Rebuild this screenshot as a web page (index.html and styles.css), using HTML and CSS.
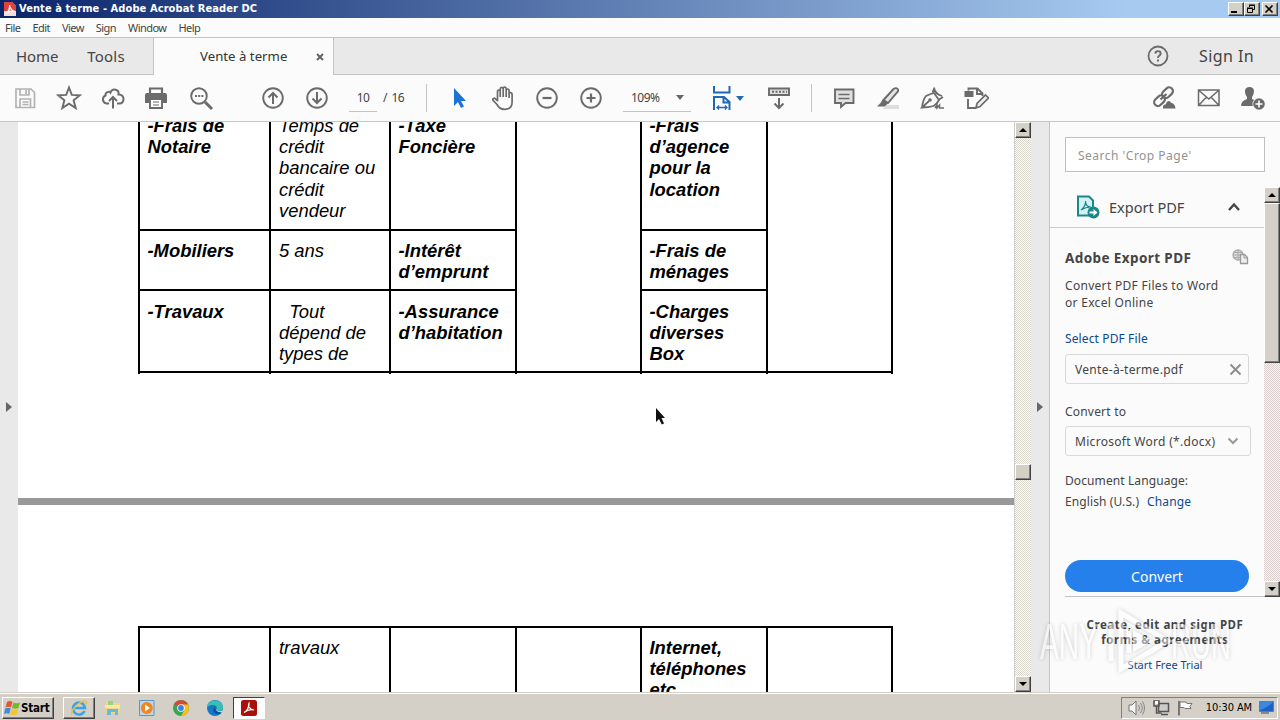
FILE: index.html
```html
<!DOCTYPE html>
<html lang="en">
<head>
    <meta charset="UTF-8">
    <title>Vente à terme - Adobe Acrobat Reader DC</title>
    <link rel="stylesheet" href="styles.css">
</head>
<body>
    <header class="titlebar">
        <svg class="app-icon" width="12" height="14" viewBox="0 0 12 14"><path d="M0 0h8l4 4v10H0z" fill="#f6dcd8"/><path d="M0 0h8l4 4v5H0z" fill="#d8281e" opacity=".85"/><path d="M2 11c3-2 4-5 3.500-8 .5 4 2 5.500 5 6-3-.5-6 .5-8.500 2z" fill="none" stroke="#fff" stroke-width="1.200"/></svg>
        <span class="title-text">Vente à terme - Adobe Acrobat Reader DC</span>
        <div class="win-buttons">
            <button class="bevel"><svg width="12" height="10"><path d="M2 8h6" stroke="#000" stroke-width="2"/></svg></button>
            <button class="bevel"><svg width="12" height="10" fill="none" stroke="#000"><path d="M4.500 3V1.500h5v4H8M4 1h6M2.500 4.500h5v4h-5zM2 4h6"/></svg></button>
            <button class="bevel close"><svg width="12" height="10"><path d="M2.500 1.500l7 7M9.500 1.500l-7 7" stroke="#000" stroke-width="1.600"/></svg></button>
        </div>
    </header>

    <nav class="menubar">
        <span>File</span><span>Edit</span><span>View</span><span>Sign</span><span>Window</span><span>Help</span>
    </nav>

    <div class="tabs">
        <div class="main-tabs"><span class="home">Home</span><span class="tools">Tools</span></div>
        <div class="doc-tab"><span>Vente à terme</span><svg width="8" height="8"><path d="M1 1l6 6M7 1l-6 6" stroke="#666" stroke-width="2"/></svg></div>
        <div class="tabs-rest">
            <svg width="22" height="22" viewBox="0 0 22 22"><circle cx="11" cy="11" r="9.500" fill="none" stroke="#6b6b6b" stroke-width="1.800"/><path d="M8.300 8.600c.2-3.300 5.400-3.200 5.400 0 0 2-2.700 2-2.700 4.300" fill="none" stroke="#6b6b6b" stroke-width="1.900"/><path d="M10 14.500h2v2h-2z" fill="#6b6b6b"/></svg>
            <span class="sign-in">Sign In</span>
        </div>
    </div>

    <div class="toolbar">
        <div class="tool light"><svg viewBox="0 0 26 26"><path d="M4 4h15l3.500 3.500V22.500H4zM8 4v6h9V4M14 5v4M8 22v-8h10.500v8M10.500 17h6M10.500 19.500h6"/></svg></div>
        <div class="tool"><svg viewBox="0 0 26 26"><path d="M13 2.500l2.800 7.400 8 .4-6.200 5 2.100 7.700-6.700-4.300L6.300 23l2.100-7.700-6.200-5 8-.4z"/></svg></div>
        <div class="tool"><svg viewBox="0 0 26 26"><path d="M9 18.500H6.500A4.200 4.200 0 0 1 5.500 10.500C5 7 9.500 6 10.500 7.500 12.500 2.500 19.500 4.500 18.500 9.500 25 9 25 18.500 19.500 18.500H17M13 23.500V12.500M9 16l4-4 4 4" stroke-width="2"/></svg></div>
        <div class="tool"><svg viewBox="1 0 26 26"><path d="M7 9V3.500h12V9" stroke-width="2.200"/><path class="fill" d="M4 8h18q2 0 2 2v8h-4v-3H6v3H2v-8q0-2 2-2z"/><path d="M7 14h12v9H7z" fill="#fff"/><path d="M10 17h6M10 20h6" stroke-width="1.200"/></svg></div>
        <div class="tool"><svg viewBox="0 0 26 26"><circle cx="11" cy="11" r="7.800"/><path d="M17 17l7 7" stroke-width="3"/><path class="fill" d="M7 10h2v2H7zM10.200 10h2v2h-2zM13.400 10h2v2h-2z"/></svg></div>
        <div class="tool after-gap"><svg viewBox="0 0 26 26"><circle cx="13" cy="13" r="9.800"/><path d="M13 19V8.500M8.500 12.500L13 8l4.500 4.500" stroke-width="2"/></svg></div>
        <div class="tool"><svg viewBox="0 0 26 26"><circle cx="13" cy="13" r="9.800"/><path d="M13 7v10.500M8.500 13.500L13 18l4.500-4.500" stroke-width="2"/></svg></div>
        <div class="pages"><span class="page-input">10</span><span class="page-total">/&nbsp; 16</span></div>
        <div class="tool"><svg viewBox="0 0 26 26"><path d="M8 3v18l4-4 3 6 3-1.500-3-5.500h5z" fill="#1b73d4" stroke="none"/></svg></div>
        <div class="tool"><svg viewBox="0 0 26 26"><path d="M7.500 15V6.500c0-2 2.700-2 2.700 0V12 4c0-2.200 3-2.200 3 0v8V3.500c0-2 3-2 3 .3V12 5.500c0-2 2.900-2 2.900 0V13 9c0-1.800 3-1.800 3 .2V17c0 5-3 7.300-7.500 7.300S8.500 22.500 7 19.500L3 15.300c-.8-1.800 1.200-2.800 2.500-1.500L8 16" stroke-width="1.700"/></svg></div>
        <div class="tool"><svg viewBox="0 0 26 26"><circle cx="13" cy="13" r="9.800"/><path d="M8.500 13h9" stroke-width="2.200"/></svg></div>
        <div class="tool"><svg viewBox="0 0 26 26"><circle cx="13" cy="13" r="9.800"/><path d="M8.500 13h9M13 8.500v9" stroke-width="2.200"/></svg></div>
        <div class="zoom-level"><span>109%</span><i class="caret"></i></div>
        <div class="fit"><svg viewBox="0 0 26 26" width="26" height="26"><g fill="none" stroke="#2267b4" stroke-width="2"><path d="M5 1v6.500h15.500V1M5 25V12h10l5.500 5V25M14.500 12v5.500h6"/><path d="M8 22.500h10M10 20.500l-2 2 2 2M16 20.500l2 2-2 2" stroke-width="1.300"/></g></svg><i class="caret blue"></i></div>
        <div class="tool"><svg viewBox="0 0 26 26"><path d="M3 3.500h20v6.500H3z" fill="#e0e0e0"/><path d="M6 6.700h15" stroke-dasharray="2 1.500"/><path d="M13 13v10M8.500 18.500l4.500 4.500 4.500-4.500" stroke-width="2"/></svg></div>
        <i class="sep"></i>
        <div class="tool"><svg viewBox="0 0 26 26"><path d="M4 4.500h18.500V18h-8L10 22v-4H4z" fill="#e0e0e0"/><path d="M7.500 9.500h11M7.500 13.500h11" stroke-width="1.600"/></svg></div>
        <div class="tool"><svg viewBox="0 0 26 26"><path d="M10 20h14v4H8z" fill="#dedede" stroke="none"/><path d="M8.500 15L18.500 4q3-2 4.500.5.500 1.500-.5 2.500L13 18z" fill="#e4e4e4"/><path class="fill" d="M7.500 14.500l5.500 4-3.500 3H2l4-4z"/></svg></div>
        <div class="tool"><svg viewBox="0 0 26 26"><path d="M3 22.500q1-8 4-11.500 4-2 8-3l5 7q-2 4-5.500 6-5 1.500-11.500 1.500L10 16M13.500 7.500l2-5M20 14.500l4-2.500M15 3q1 6 8 8" stroke-width="1.800"/><circle cx="11" cy="15" r="1.800" class="fill"/><path d="M16 23l2-3v3l2.500-3v3H25" stroke-width="1.500"/></svg></div>
        <div class="tool"><svg viewBox="0 0 26 26"><path class="fill" d="M1.500 6h9v6h-9z"/><path d="M5.500 5.500V3.500h9l5 5V11M14 3.500V9h5.500M5 14v9h8"/><path d="M13 23l1-4.500 8.500-8.500 3 3-8.500 8.500z" fill="#f0f0f0" stroke-width="1.700"/></svg></div>
        <div class="tool push"><svg viewBox="0 0 26 26"><g stroke-width="2.200"><rect x="10.500" y="4" width="12" height="7.500" rx="3.700" transform="rotate(-43 16.500 7.700)"/><rect x="2.500" y="12" width="12" height="7.500" rx="3.700" transform="rotate(-43 8.500 15.700)"/><path d="M9.500 14.500l6-5.500"/></g><path d="M11 25q-1-5.500 3-6.500Q17 12 21 17.500q4 1 4 7.500z" fill="#fbfbfb" stroke="none"/><path class="fill" d="M12 23.500q-.5-4 2.500-4Q17 13.500 20.500 18q3.500.5 4 5.500z"/></svg></div>
        <div class="tool mail"><svg viewBox="0 0 26 26"><path d="M2.500 5h20.500v15.500H2.500zM3 5.500l9.800 8.500 9.800-8.500M3 20l7.500-8M22.500 20L15 12" stroke-width="1.500"/></svg></div>
        <div class="tool"><svg viewBox="0 0 26 26"><path class="fill" d="M9.500 2C15 2 15 8 12 12v2l4 2v5H1q0-5 6-7v-2C4 8 4 2 9.500 2z"/><circle cx="19" cy="19" r="6.500" fill="#fbfbfb" stroke="none"/><circle cx="19" cy="19" r="5.800" class="fill"/><path d="M15.500 19h7M19 15.500v7" stroke="#fff" stroke-width="1.600"/></svg></div>
    </div>

    <main class="workspace">
        <div class="rail left"><i class="expand"></i></div>

        <section class="document">
            <div class="page page-top">
                <div class="budget">
                    <div class="col c1"><div class="cell r1"><p>-Frais de<br>Notaire</p></div><div class="cell r2">-Mobiliers</div><div class="cell r3">-Travaux</div></div>
                    <div class="col c2 plain"><div class="cell r1"><p>Temps de<br>crédit<br>bancaire ou<br>crédit<br>vendeur</p></div><div class="cell r2">5 ans</div><div class="cell r3">&nbsp; Tout<br>dépend de<br>types de</div></div>
                    <div class="col c3"><div class="cell r1"><p>-Taxe<br>Foncière</p></div><div class="cell r2">-Intérêt<br>d’emprunt</div><div class="cell r3">-Assurance<br>d’habitation</div></div>
                    <div class="col c4"><div class="cell merged"></div></div>
                    <div class="col c5"><div class="cell r1"><p>-Frais<br>d’agence<br>pour la<br>location</p></div><div class="cell r2">-Frais de<br>ménages</div><div class="cell r3">-Charges<br>diverses<br>Box</div></div>
                    <div class="col c6"><div class="cell merged"></div></div>
                </div>
            </div>
            <div class="page page-next">
                <div class="budget">
                    <div class="col c1"></div>
                    <div class="col c2 plain"><div class="cell">travaux</div></div>
                    <div class="col c3"></div>
                    <div class="col c4"></div>
                    <div class="col c5"><div class="cell">Internet,<br>téléphones<br>etc</div></div>
                    <div class="col c6"></div>
                </div>
            </div>
            <svg class="pointer" width="12" height="18" viewBox="0 0 12 18"><path d="M1 0v14l3-3 2.800 5.500 2.200-1L6.500 10H10z" fill="#111"/></svg>
        </section>

        <div class="scrollbar doc-scroll">
            <span class="bevel sb-btn"><i class="up"></i></span>
            <span class="bevel thumb"></span>
            <span class="bevel sb-btn"><i class="down"></i></span>
        </div>
        <div class="rail right"><i class="expand"></i></div>

        <aside class="panel">
            <div class="search">Search 'Crop Page'</div>
            <div class="panel-body">
                <div class="panel-content">
                    <div class="export-head">
                        <svg width="24" height="24" viewBox="0 0 24 24"><path d="M2 1.500h11l4 4V20.500H2z" fill="#d5f0f2" stroke="#17898b" stroke-width="2"/><path d="M5 15c3-2 5-6 4.500-9 0 4 2 6 5.500 6-4 0-7 1-10 3z" fill="none" stroke="#17898b" stroke-width="1.200"/><circle cx="17.500" cy="17.500" r="6" fill="#17898b"/><path d="M13.500 16.500h4v-2.500l4 3.500-4 3.500v-2.500h-4z" fill="#fff"/></svg>
                        <span>Export PDF</span>
                        <svg class="chev" width="14" height="10"><path d="M2 8l5-5.500L12 8" fill="none" stroke="#444" stroke-width="2.400"/></svg>
                    </div>
                    <div class="form">
                        <div class="form-title"><b>Adobe Export PDF</b>
                            <svg width="17" height="16" viewBox="0 0 17 16"><circle cx="6" cy="6" r="5" fill="#ddd" stroke="#aaa" stroke-width="1.300"/><path d="M1 6h10M6 1v10M2 3.500h8M2 8.500h8" stroke="#aaa"/><path d="M8.500 5.500h4l3 3V14.500h-7z" fill="#eee" stroke="#999" stroke-width="1.300"/><path d="M12 5.500V9h3.500" fill="none" stroke="#999"/></svg>
                        </div>
                        <p class="desc">Convert PDF Files to Word<br>or Excel Online</p>
                        <a class="select-file">Select PDF File</a>
                        <div class="field file"><span>Vente-à-terme.pdf</span><svg width="13" height="13"><path d="M1.500 1.500l10 10M11.500 1.500l-10 10" stroke="#8e8e8e" stroke-width="2"/></svg></div>
                        <label>Convert to</label>
                        <div class="field format"><span>Microsoft Word (*.docx)</span><svg width="12" height="8"><path d="M1.500 1.500L6 6l4.500-4.500" fill="none" stroke="#999" stroke-width="2"/></svg></div>
                        <p class="doc-lang">Document Language:</p>
                        <p class="lang"><span>English (U.S.)</span><a>Change</a></p>
                        <button class="convert">Convert</button>
                    </div>
                </div>
                <div class="scrollbar panel-scroll">
                    <span class="bevel sb-btn"><i class="up"></i></span>
                    <span class="bevel thumb"></span>
                    <span class="bevel sb-btn"><i class="down"></i></span>
                </div>
            </div>
            <div class="promo">
                <b>Create, edit and sign PDF<br>forms &amp; agreements</b>
                <a>Start Free Trial</a>
            </div>
        </aside>
    </main>

    <svg class="watermark" width="200" height="70" viewBox="0 0 200 70">
        <g fill="#fff" font-family="Liberation Sans, sans-serif" font-size="50">
            <text x="3" y="52" textLength="58" lengthAdjust="spacingAndGlyphs">ANY</text>
            <text x="134" y="52" textLength="60" lengthAdjust="spacingAndGlyphs">RUN</text>
        </g>
        <path d="M74 16v38M84 6l47 28-47 28zM92 22v24" fill="none" stroke="#fff" stroke-width="5"/>
        <path d="M96 23l20 11-20 11z" fill="#fff"/>
    </svg>

    <footer class="taskbar">
        <button class="bevel start"><svg width="17" height="16" viewBox="0 0 17 16"><path d="M3 2q3-2 5.500 0L7 7.500Q4.500 6 1.500 7.500z" fill="#e8552b"/><path d="M9.500 2.500q3 1.500 6.500 0L14.500 8Q11 9.500 8 8z" fill="#76b82a"/><path d="M1.200 8.500q3-1.500 5.500 0L5.200 14Q3 12.500 0 14z" fill="#3c8edb"/><path d="M7.700 9q3 1.500 6.500 0l-1.500 5.500q-3 1.500-6.500 0z" fill="#f6c52c"/></svg>Start</button>
        <span class="bevel task ie"><svg width="18" height="18" viewBox="0 0 18 18"><path d="M14.500 12a6 6 0 1 1 .5-3H4" fill="none" stroke="#3aa5e2" stroke-width="2.600"/><path d="M2 16C-1 12 12 0 16 2.500c1 1 0 3-1 4" fill="none" stroke="#f0c042" stroke-width="1.500"/></svg></span>
        <span class="task"><svg width="18" height="16" viewBox="0 0 18 16"><path d="M2 2h6l1 1h7v10H2z" fill="#f1d883"/><path d="M4 1h5v4H4z" fill="#9bd07c"/><path d="M1 5h15v3H1z" fill="#f8e9a9"/><path d="M3 15V9h11v6h-3v-3H7v3z" fill="#6bb7dd"/></svg></span>
        <span class="task"><svg width="16" height="16" viewBox="0 0 16 16"><path d="M.5.500h14.500v15H.5z" fill="#bcd8ee" stroke="#5996c6"/><circle cx="7.800" cy="8" r="6" fill="#ef8620"/><path d="M6 4.500l5 3.500-5 3.500z" fill="#fff"/></svg></span>
        <span class="task"><svg width="16" height="16" viewBox="0 0 16 16"><circle cx="8" cy="8" r="8" fill="#36a651"/><path d="M8 8L1 4.200A8 8 0 0 1 15 4.500z" fill="#df4334"/><path d="M8 8V4.500h7A8 8 0 0 1 8 16l3.500-6z" fill="#fbc116"/><circle cx="8" cy="8" r="3.800" fill="#fff"/><circle cx="8" cy="8" r="2.900" fill="#3f7de8"/></svg></span>
        <span class="task"><svg width="16" height="16" viewBox="0 0 16 16"><circle cx="8" cy="8" r="8" fill="#1378c8"/><path d="M0 7C1-1 14-2 16 7c0 4-4 5-7 3 3-4-3-7-9-3z" fill="#35c0b0"/><path d="M9 6c-2 2-1 6 6 5.500l-2 2.500C7 15 4 10 9 6z" fill="#0d4f9c"/><path d="M9 9c2 3 5 2.500 7 1l-1.200 2.200C11 12.500 9 11 9 9z" fill="#d6d2cb"/></svg></span>
        <span class="task active"><svg width="16" height="16" viewBox="0 0 16 16"><rect width="16" height="16" rx="2.500" fill="#a90f0b"/><path d="M3 12.500c3-1.500 5.500-6 5-9.500-1.500 2 .5 7 5 7-3-1-7 0-10 2.500z" fill="none" stroke="#fff" stroke-width="1.200"/></svg></span>
        <div class="tray">
            <svg width="18" height="16" viewBox="0 0 18 16"><path d="M1 5h3l4-4v14l-4-4H1z" fill="#f4f4f4" stroke="#777"/><path d="M10.500 5q2 3 0 6M12.500 3q3.500 5 0 10M14.500 1.500q4 6.500 0 13" fill="none" stroke="#888"/></svg>
            <svg width="17" height="16" viewBox="0 0 17 16"><path d="M5.500 3.500h10v8h-10z" fill="#ccc" stroke="#555" stroke-width="1.500"/><path d="M1 1h5v5H1zM3.500 6v7h5M8 14.500h7" fill="none" stroke="#555" stroke-width="1.500"/><path d="M2 1v3h3V1" fill="#fff"/></svg>
            <svg width="17" height="16" viewBox="0 0 17 16"><path d="M2 1v14.500" stroke="#777" stroke-width="2"/><path d="M3 2h6l1 1.500h5L13 6.500l1 2H8L7 7.500H3z" fill="#fafafa" stroke="#777"/></svg>
            <span class="clock">10:30 AM</span>
            <svg width="15" height="13" viewBox="0 0 15 13"><path d="M.5.500h14v10H.5z" fill="#1d62c3" stroke="#5b7ba8"/><path d="M1 9C5 8 10 5 14 1H1z" fill="#3d87de"/><path d="M2 12h8" stroke="#345"/></svg>
        </div>
    </footer>
</body>
</html>
```
FILE: styles.css
```css
* {
    box-sizing: border-box;
}
body {
    margin: 0;
    width: 1280px;
    height: 720px;
    overflow: hidden;
    display: flex;
    flex-direction: column;
    position: relative;
    background: #fbfbfb;
    color: #444;
    font-family: "Noto Sans", "Open Sans", sans-serif;
    font-size: 12px;
}
p {
    margin: 0;
}
svg {
    display: block;
    flex: none;
}
a {
    color: #0d4a8c;
}
button {
    font-family: inherit;
    padding: 0;
}
.bevel {
    background: #d4d0c8;
    border: 1px solid;
    border-color: #fff #404040 #404040 #fff;
    box-shadow: inset -1px -1px 0 #808080;
}

/* window chrome */
.titlebar {
    flex: none;
    height: 18px;
    display: flex;
    align-items: center;
    padding: 0 2px 0 4px;
    background: linear-gradient(to right, #0a246a, #a6caf0 88%);
}
.title-text {
    margin-left: 3px;
    color: #fff;
    font: bold 11px/18px "DejaVu Sans Condensed", "DejaVu Sans", sans-serif;
    letter-spacing: 0.09px;
    white-space: nowrap;
}
.win-buttons {
    display: flex;
    margin-left: auto;
}
.win-buttons button {
    width: 16px;
    height: 14px;
}
.win-buttons .close {
    margin-left: 2px;
}
.menubar {
    flex: none;
    height: 20px;
    display: flex;
    gap: 12px;
    padding-left: 5px;
    border-bottom: 1px solid #c3c3c3;
    font-size: 11px;
    line-height: 19px;
    letter-spacing: -0.55px;
}
.tabs {
    flex: none;
    height: 37px;
    display: flex;
    font-size: 15px;
    line-height: 37px;
}
.main-tabs,
.tabs-rest {
    background: #e9e9e9;
    border-bottom: 1px solid #c3c3c3;
}
.main-tabs {
    width: 154px;
    padding-left: 16px;
    border-right: 1px solid #c3c3c3;
}
.main-tabs .home {
    letter-spacing: -0.1px;
}
.main-tabs .tools {
    margin-left: 29px;
    letter-spacing: 0.2px;
}
.doc-tab {
    width: 179px;
    display: flex;
    align-items: center;
    padding-left: 46px;
    font-size: 13px;
    letter-spacing: 0.05px;
    color: #333;
}
.doc-tab span {
    letter-spacing: 0.02px;
}
.doc-tab svg {
    margin: 0 9px 0 auto;
}
.doc-tab {
    font-size: 13.2px;
}
.tabs-rest {
    flex: 1;
    display: flex;
    align-items: center;
    justify-content: flex-end;
    border-left: 1px solid #c3c3c3;
    padding-right: 26px;
}
.sign-in {
    margin-left: 30px;
    font-size: 16px;
    letter-spacing: 0.4px;
}

/* toolbar */
.toolbar {
    flex: none;
    height: 47px;
    display: flex;
    align-items: center;
    padding: 0 5px 0 3px;
    border-bottom: 1px solid #c3c9c8;
}
.tool {
    width: 44px;
    display: flex;
    justify-content: center;
}
.tool svg {
    width: 26px;
    height: 26px;
    fill: none;
    stroke: #6b6b6b;
    stroke-width: 1.9;
}
.tool.light svg {
    stroke: #b2b2b2;
    stroke-width: 1.7;
}
.tool .fill {
    fill: #6b6b6b;
    stroke: none;
}
.after-gap {
    margin-left: 28px;
}
.push {
    margin-left: auto;
}
.mail {
    width: 45px;
}
.pages {
    width: 88px;
    height: 28px;
    margin-right: 10px;
    padding-left: 10px;
    display: flex;
    border-right: 1px solid #c3c3c3;
    line-height: 27px;
    letter-spacing: -0.7px;
}
.page-input {
    width: 28px;
    border-bottom: 1px solid #c3c3c3;
    text-align: center;
}
.page-total {
    margin-left: 6px;
}
.zoom-level {
    width: 68px;
    height: 28px;
    margin: 0 15px 0 10px;
    padding: 0 7px 0 8px;
    display: flex;
    align-items: center;
    justify-content: space-between;
    border-bottom: 1px solid #c3c3c3;
    letter-spacing: -0.5px;
}
.caret {
    border: 4px solid transparent;
    border-top: 5px solid #666;
    border-bottom: 0;
}
.caret.blue {
    border-top-color: #2267b4;
}
.fit {
    width: 51px;
    padding-left: 3px;
    display: flex;
    align-items: center;
}
.fit .caret {
    margin-left: 1px;
}
.sep {
    width: 1px;
    height: 28px;
    margin: 0 10px;
    background: #c3c3c3;
}

/* document area */
.workspace {
    flex: none;
    height: 570px;
    display: flex;
    overflow: hidden;
}
.rail {
    width: 18px;
    display: flex;
    align-items: center;
    padding-left: 6px;
    background: #e9e9e9;
}
.expand {
    border: 5px solid transparent;
    border-left: 6px solid #666;
    border-right: 0;
}
.document {
    width: 996px;
    position: relative;
    overflow: hidden;
    background: #fff;
    color: #000;
    font: italic bold 18.4px/21.2px "Liberation Sans", Arial, sans-serif;
}
.page {
    padding-left: 120px;
}
.page-top {
    height: 383px;
    border-bottom: 7px solid #999;
}
.page-next {
    padding-top: 121px;
}
.budget {
    display: grid;
    grid-template-columns: 131px 120px 126px 125px 126px 127px;
}
.col {
    border-left: 2px solid #000;
}
.col.c6 {
    border-right: 2px solid #000;
}
.plain {
    font-weight: normal;
}
.cell {
    padding: 9px 0 0 7.5px;
    white-space: nowrap;
}
.plain .cell {
    padding-left: 8px;
}
.page-top .budget {
    height: 252px;
}
.page-top .cell {
    border-bottom: 2px solid #000;
}
.page-top .r1 {
    height: 109px;
    padding-top: 0;
    overflow: hidden;
}
.r1 p {
    margin-top: -7px;
}
.r2 {
    height: 60px;
}
.page-top .r3 {
    height: 82px;
    padding-top: 10px;
}
.page-top .merged {
    height: 251px;
}
.page-next .col {
    height: 90px;
    border-top: 2px solid #000;
}
.pointer {
    position: absolute;
    left: 637px;
    top: 286px;
}

/* classic scrollbars */
.scrollbar {
    display: flex;
    flex-direction: column;
    background: repeating-conic-gradient(#d8d8cd 0 25%, #fbfbf8 0 50%) 0 0 / 2px 2px;
}
.sb-btn {
    height: 16px;
    display: flex;
    align-items: center;
    justify-content: center;
}
.sb-btn:last-child {
    margin-top: auto;
}
.up,
.down {
    border: 4px solid transparent;
}
.up {
    border-top: 0;
    border-bottom-color: #000;
}
.down {
    border-bottom: 0;
    border-top-color: #000;
}
.doc-scroll {
    width: 17px;
    border-left: 1px solid #ccc;
}
.doc-scroll .thumb {
    height: 16px;
    margin-top: 326px;
}
.panel-scroll {
    width: 16px;
    background: repeating-conic-gradient(#dccfcf 0 25%, #f7f3f1 0 50%) 0 0 / 2px 2px;
}
.panel-scroll .thumb {
    height: 160px;
}

/* right panel */
.panel {
    width: 231px;
    border-left: 1px solid #c3c3c3;
}
.search {
    width: 200px;
    height: 35px;
    margin: 15px 0 15px 15px;
    padding-left: 12px;
    border: 1px solid #c0c0c0;
    background: #fff;
    color: #929292;
    font-size: 12px;
    letter-spacing: 0.5px;
    line-height: 35px;
}
.panel-body {
    height: 410px;
    display: flex;
}
.panel-content {
    width: 214px;
}
.export-head {
    height: 41px;
    display: flex;
    align-items: center;
    padding: 0 23px 0 26px;
    border-bottom: 1px solid #ccc;
    font-size: 14.5px;
}
.export-head span {
    margin-left: 9px;
}
.chev {
    margin-left: auto;
}
.form {
    height: 369px;
    margin-left: 15px;
    border-bottom: 1px solid #c3c3c3;
    line-height: 17px;
}
.form-title {
    display: flex;
    justify-content: space-between;
    padding: 21px 15px 0 0;
    font-size: 13.5px;
    line-height: 18px;
    letter-spacing: 0.4px;
}
.desc {
    margin-top: 10px;
    letter-spacing: 0.3px;
}
.select-file {
    display: block;
    margin-top: 19px;
    letter-spacing: 0.12px;
}
.field {
    height: 30px;
    display: flex;
    align-items: center;
    justify-content: space-between;
    padding: 0 6px 0 9px;
    border: 1px solid #d9d9d9;
    border-radius: 3px;
    letter-spacing: 0.3px;
}
.file {
    width: 184px;
    margin: 7px 0 19px;
}
.format {
    width: 186px;
    margin: 6px 0 16px;
    padding-right: 11px;
}
label {
    display: block;
    letter-spacing: 0.2px;
}
.doc-lang,
.lang {
    letter-spacing: 0.1px;
}
.lang {
    margin-top: 4px;
}
.lang a {
    margin-left: 8px;
}
.convert {
    display: block;
    width: 184px;
    height: 32px;
    margin-top: 50px;
    border: 0;
    border-radius: 16px;
    background: #2680eb;
    color: #fff;
    font-size: 14px;
}
.promo {
    padding-top: 20px;
    text-align: center;
    line-height: 15px;
}
.promo b,
.promo a {
    display: block;
}
.promo b {
    font-size: 11.5px;
    letter-spacing: 0.55px;
}
.promo a {
    margin-top: 10px;
    font-size: 11px;
}
.watermark {
    position: absolute;
    left: 1037px;
    top: 607px;
    opacity: 0.5;
    filter: drop-shadow(0 0 2px rgba(0, 0, 0, 0.35));
}

/* taskbar */
.taskbar {
    flex: none;
    height: 28px;
    display: flex;
    align-items: center;
    padding: 2px 2px 0;
    border-top: 1px solid #d4d0c8;
    box-shadow: inset 0 1px 0 #fff;
    background: #d4d0c8;
    color: #000;
}
.start {
    width: 52px;
    height: 22px;
    display: flex;
    align-items: center;
    padding-left: 1px;
    margin-right: 9px;
    font: bold 11.5px "DejaVu Sans Condensed", sans-serif;
    letter-spacing: -0.2px;
}
.task {
    width: 32px;
    height: 22px;
    margin-right: 2px;
    display: flex;
    align-items: center;
    justify-content: center;
}
.task.active {
    background: #fff;
    border: 1px solid;
    border-color: #404040 #fff #fff #404040;
}
.tray {
    width: 157px;
    height: 22px;
    margin-left: auto;
    display: flex;
    align-items: center;
    gap: 7px;
    padding: 0 3px 0 6px;
    border: 1px solid;
    border-color: #808080 #fff #fff #808080;
}
.clock {
    margin-left: auto;
    font: 11px "DejaVu Sans Condensed", sans-serif;
    letter-spacing: -0.1px;
    white-space: nowrap;
}
```
